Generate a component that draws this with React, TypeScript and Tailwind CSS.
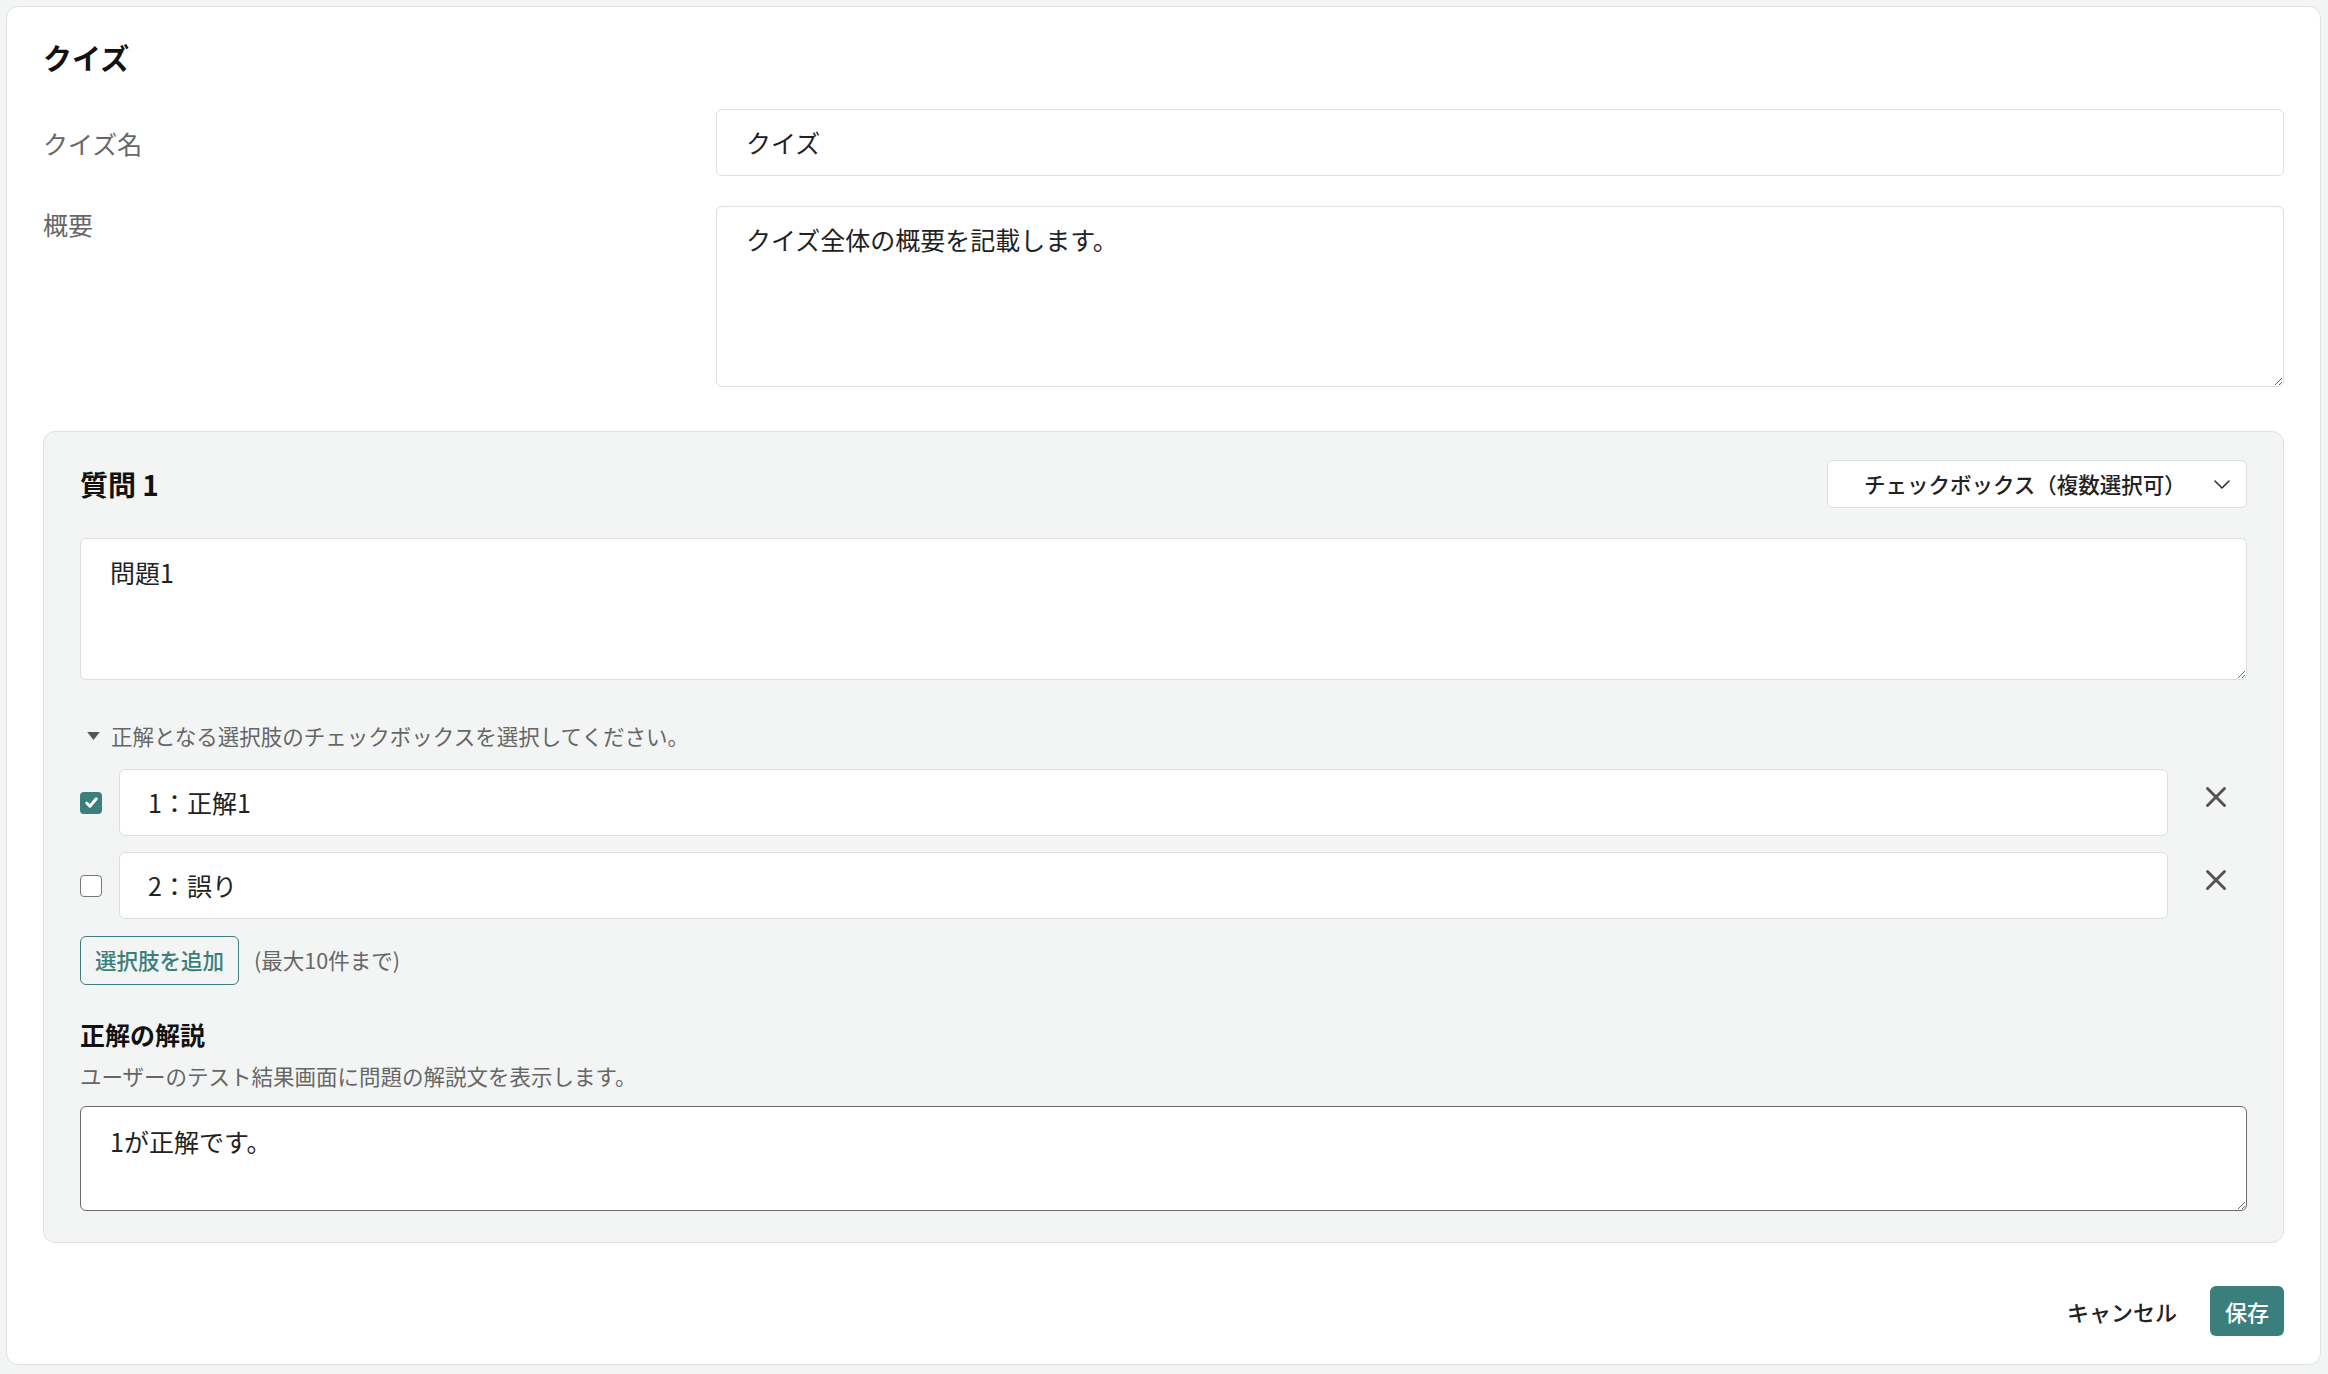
import { X } from 'lucide-react';

const options = [
  { id: 1, label: '1：正解1', checked: true },
  { id: 2, label: '2：誤り', checked: false },
];

const Checkbox = ({ checked }: { checked: boolean }) =>
  checked ? (
    <span className="flex h-[22px] w-[22px] shrink-0 items-center justify-center rounded-[4px] bg-[#3b7f7d]">
      <svg viewBox="0 0 16 16" className="h-[17px] w-[17px]" fill="none" stroke="#fff" strokeWidth={2.8} strokeLinecap="round" strokeLinejoin="round">
        <path d="M3.5 8.5l3 3 6-7" />
      </svg>
    </span>
  ) : (
    <span className="block h-[22px] w-[22px] shrink-0 rounded-[4px] border-[1.5px] border-[#777] bg-white" />
  );

export default function App() {
  return (
    <div className="min-h-screen bg-[#f3f4f4] pt-[6px] pl-[6px] pr-[7px] pb-[10px] font-['Noto_Sans_CJK_JP','Noto_Sans',sans-serif] text-[#222]">
      <div className="rounded-[12px] border border-[#e0e2e2] bg-white px-[36px] pt-[28px] pb-[28px]">
        {/* Title */}
        <h1 className="h-[45px] text-[29px] font-bold leading-[45px] text-[#111]">クイズ</h1>

        {/* Quiz name */}
        <div className="mt-[29px] grid grid-cols-[673px_1fr] items-center">
          <label className="text-[25px] leading-[36px] text-[#666]">クイズ名</label>
          <div className="flex h-[67px] items-center rounded-[6px] border border-[#dcdede] bg-white px-[29px] text-[25px] text-[#222]">
            クイズ
          </div>
        </div>

        {/* Summary */}
        <div className="mt-[30px] grid grid-cols-[673px_1fr] items-start">
          <label className="text-[25px] leading-[36px] text-[#666]">概要</label>
          <textarea
            readOnly
            defaultValue="クイズ全体の概要を記載します。"
            className="block h-[181px] w-full resize-y rounded-[6px] border border-[#dcdede] bg-white px-[29px] pt-[14px] text-[25px] leading-[36px] text-[#222] outline-none"
          />
        </div>

        {/* Question panel */}
        <div className="mt-[44px] rounded-[12px] border border-[#e0e2e2] bg-[#f3f5f4] px-[36px] pt-[28px] pb-[31px]">
          <div className="flex items-center justify-between">
            <h2 className="text-[28px] font-bold leading-[40px] text-[#111]">質問 1</h2>
            <div className="flex h-[48px] w-[420px] items-center justify-between rounded-[6px] border border-[#dcdede] bg-white pl-[36px] pr-[14px]">
              <span className="text-[21.5px] font-medium text-[#222]">チェックボックス（複数選択可）</span>
              <svg viewBox="0 0 20 20" className="h-[20px] w-[20px]" fill="none" stroke="#333" strokeWidth={1.6} strokeLinecap="round" strokeLinejoin="round">
                <path d="M3 7l7 7 7-7" />
              </svg>
            </div>
          </div>

          <textarea
            readOnly
            defaultValue="問題1"
            className="mt-[30px] block h-[142px] w-full resize-y rounded-[6px] border border-[#dcdede] bg-white px-[29px] pt-[15px] text-[25px] leading-[36px] text-[#222] outline-none"
          />

          {/* Disclosure */}
          <div className="mt-[40px] flex h-[32px] items-center gap-[11px] pl-[7px] text-[21.5px] text-[#666]">
            <svg viewBox="0 0 14 10" className="h-[9px] w-[13px]" fill="#555">
              <path d="M0 0h14L7 9z" />
            </svg>
            <span>正解となる選択肢のチェックボックスを選択してください。</span>
          </div>

          {/* Options */}
          <div className="mt-[17px] flex flex-col gap-[16px]">
            {options.map((o) => (
              <div key={o.id} className="flex items-center">
                <Checkbox checked={o.checked} />
                <div className="ml-[17px] flex h-[67px] flex-1 items-center rounded-[6px] border border-[#dcdede] bg-white px-[28px] text-[25px] text-[#222]">
                  {o.label}
                </div>
                <button className="flex w-[79px] shrink-0 -translate-y-[6px] items-center justify-center pl-[16px] text-[#555]">
                  <X size={34} strokeWidth={2.1} />
                </button>
              </div>
            ))}
          </div>

          {/* Add */}
          <div className="mt-[17px] flex items-center gap-[15px]">
            <button className="h-[49px] rounded-[6px] border border-[#3b7f7d] px-[14px] text-[21.5px] font-medium text-[#3b7f7d]">
              選択肢を追加
            </button>
            <span className="text-[21.5px] text-[#666]">(最大10件まで)</span>
          </div>

          {/* Explanation */}
          <h3 className="mt-[31px] text-[25px] font-bold leading-[36px] text-[#111]">正解の解説</h3>
          <p className="mt-[9px] text-[21.5px] leading-[30px] text-[#666]">ユーザーのテスト結果画面に問題の解説文を表示します。</p>
          <textarea
            readOnly
            defaultValue="1が正解です。"
            className="mt-[15px] block h-[105px] w-full resize-y rounded-[6px] border border-[#6b6b6b] bg-white px-[29px] pt-[16px] text-[25px] leading-[36px] text-[#222] outline-none"
          />
        </div>

        {/* Footer */}
        <div className="mt-[43px] flex items-center justify-end gap-[33px]">
          <button className="text-[22px] font-medium text-[#222]">キャンセル</button>
          <button className="h-[50px] w-[74px] rounded-[6px] bg-[#3b7f7d] text-[22px] font-medium text-white">保存</button>
        </div>
      </div>
    </div>
  );
}
